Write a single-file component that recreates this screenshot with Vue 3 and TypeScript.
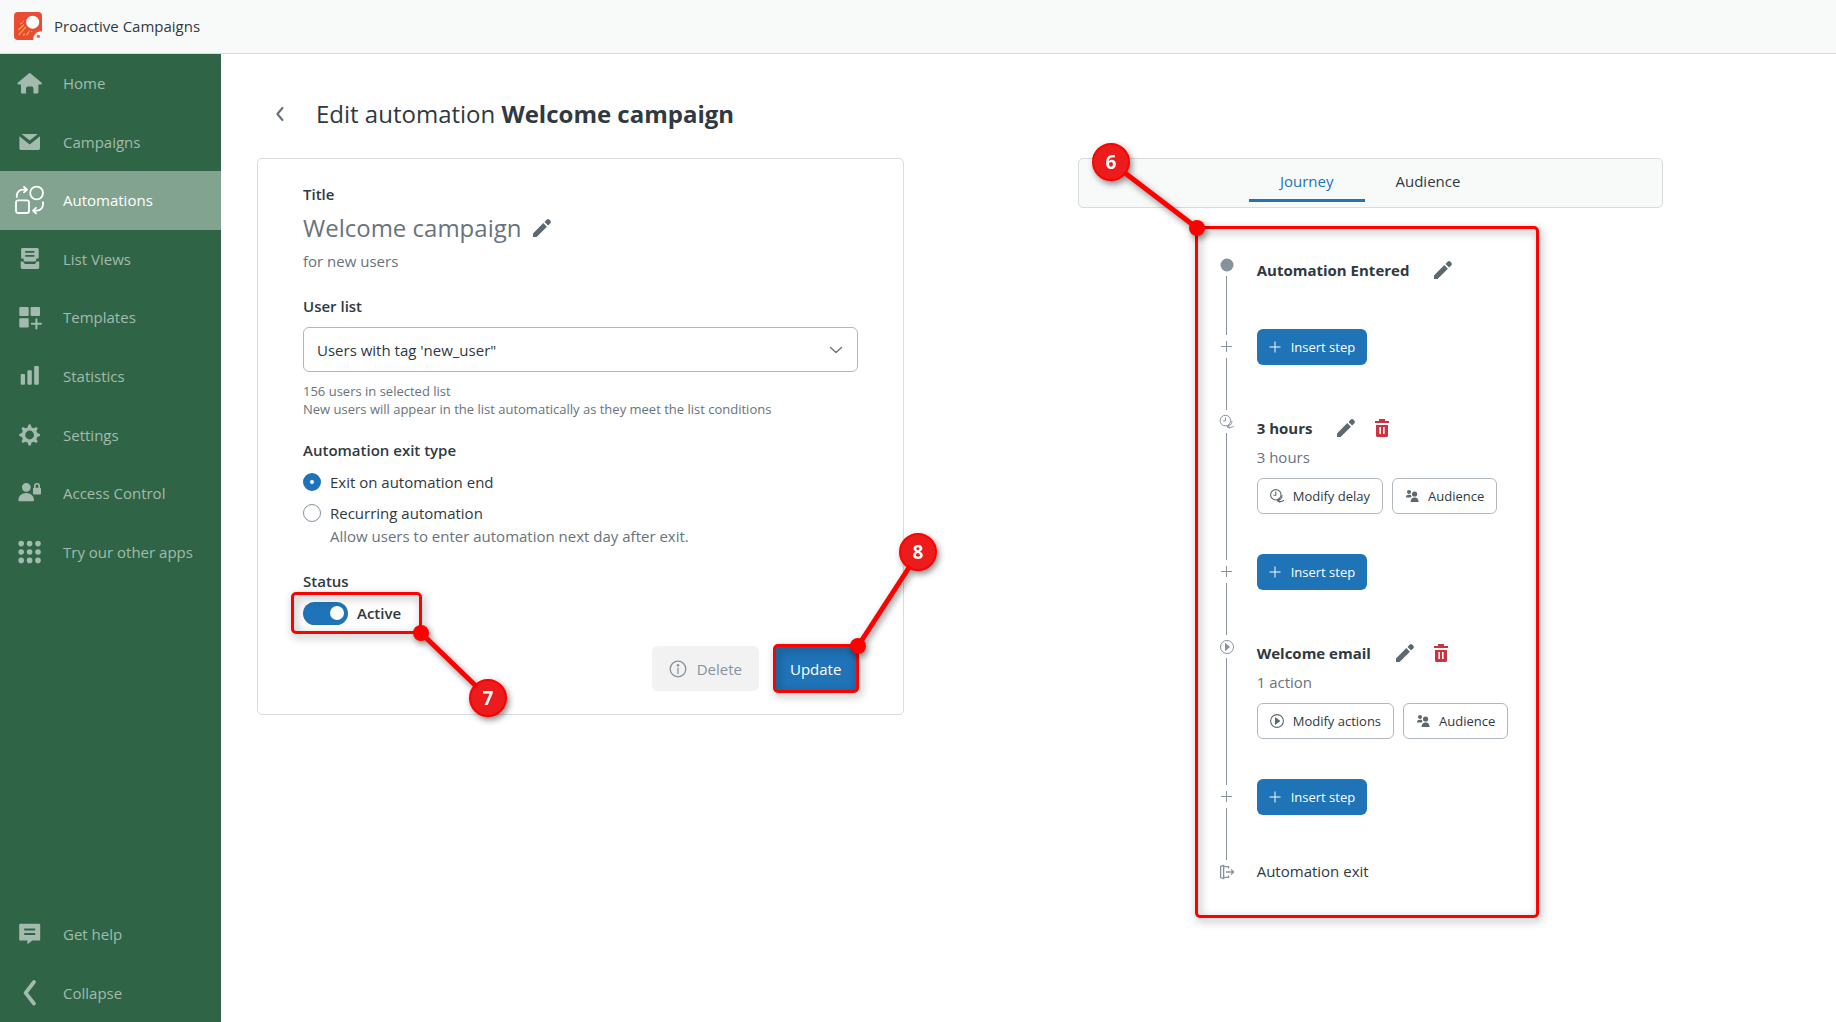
<script setup lang="ts">
import { ref } from 'vue'

interface NavItem {
  label: string
  solid?: string
  line?: string
  lineWidth?: number
  active?: boolean
}

interface Step {
  kind: 'start' | 'insert' | 'delay' | 'action' | 'exit'
  title?: string
  detail?: string
  modify?: string
}

const navItems: NavItem[] = [
  {
    label: 'Home',
    solid:
      'M13.8 5.4a1.4 1.4 0 0 1 1.8 0L26.4 14.6c1 .9.5 2-.7 2H23.4V24.6a1 1 0 0 1-1 1H18.4V20.4a1.8 1.8 0 0 0-1.8-1.8H12.8a1.8 1.8 0 0 0-1.8 1.8V25.6H7a1 1 0 0 1-1-1V16.6H3.7c-1.2 0-1.7-1.1-.7-2Z',
  },
  {
    label: 'Campaigns',
    solid:
      'M6.6 7H22.8L14.7 13.4ZM4.4 9.2 14.7 17.4 25 9.2V21.6A1.4 1.4 0 0 1 23.6 23H5.8A1.4 1.4 0 0 1 4.4 21.6Z',
  },
  {
    label: 'Automations',
    active: true,
    line: 'M28 8A6.4 6.4 0 1 1 15.2 8A6.4 6.4 0 1 1 28 8ZM3 15.4H12A2 2 0 0 1 14 17.4V26A2 2 0 0 1 12 28H3A2 2 0 0 1 1 26V17.4A2 2 0 0 1 3 15.4ZM1.8 12V10.6A6 6 0 0 1 7.8 4.6H11.6M9 1.8 12 4.6 9 7.4M28 17.2V19.6A6 6 0 0 1 22 25.6H18.4M21 22.8 18 25.6 21 28.4',
    lineWidth: 1.8,
  },
  {
    label: 'List Views',
    solid:
      'M7.5 4H22.3A1.4 1.4 0 0 1 23.7 5.4V14.6H21.2V16.2A1.4 1.4 0 0 1 19.8 17.6H10A1.4 1.4 0 0 1 8.6 16.2V14.6H6.1V5.4A1.4 1.4 0 0 1 7.5 4ZM10.2 7V8.7H19.4V7ZM10.2 11V12.7H19.4V11ZM5.7 17.6H8.2L9.8 20H20L21.6 17.6H24.2V23.6A1.4 1.4 0 0 1 22.8 25H7.1A1.4 1.4 0 0 1 5.7 23.6Z',
  },
  {
    label: 'Templates',
    solid:
      'M5.3 5H12.7A1 1 0 0 1 13.7 6V13A1 1 0 0 1 12.7 14H5.3A1 1 0 0 1 4.3 13V6A1 1 0 0 1 5.3 5ZM16.6 5H24A1 1 0 0 1 25 6V13A1 1 0 0 1 24 14H16.6A1 1 0 0 1 15.6 13V6A1 1 0 0 1 16.6 5ZM5.3 16.2H12.7A1 1 0 0 1 13.7 17.2V24.4A1 1 0 0 1 12.7 25.4H5.3A1 1 0 0 1 4.3 24.4V17.2A1 1 0 0 1 5.3 16.2Z',
    line: 'M21.4 17.2V26.4M16.8 21.8H26',
    lineWidth: 2,
  },
  {
    label: 'Statistics',
    solid:
      'M6.7 13H9A1 1 0 0 1 10 14V22.8A1 1 0 0 1 9 23.8H6.7A1 1 0 0 1 5.7 22.8V14A1 1 0 0 1 6.7 13ZM13.4 9.2H15.8A1 1 0 0 1 16.8 10.2V22.8A1 1 0 0 1 15.8 23.8H13.4A1 1 0 0 1 12.4 22.8V10.2A1 1 0 0 1 13.4 9.2ZM20.2 5H22.8A1 1 0 0 1 23.8 6V22.8A1 1 0 0 1 22.8 23.8H20.2A1 1 0 0 1 19.2 22.8V6A1 1 0 0 1 20.2 5Z',
  },
  {
    label: 'Settings',
    solid:
      'M13.3 5.2A1.4 1.4 0 0 1 15.9 5.2L16.6 7.4 18.7 8.3 20.8 7.2A1.4 1.4 0 0 1 22.5 8.9L21.4 11 22.3 13.1 24.2 13.7A1.4 1.4 0 0 1 24.2 16.3L22.3 16.9 21.4 19 22.5 21.1A1.4 1.4 0 0 1 20.8 22.8L18.7 21.7 16.6 22.6 15.9 24.8A1.4 1.4 0 0 1 13.3 24.8L12.6 22.6 10.5 21.7 8.4 22.8A1.4 1.4 0 0 1 6.7 21.1L7.8 19 6.9 16.9 5 16.3A1.4 1.4 0 0 1 5 13.7L6.9 13.1 7.8 11 6.7 8.9A1.4 1.4 0 0 1 8.4 7.2L10.5 8.3 12.6 7.4ZM14.6 10.6A4.4 4.4 0 1 0 14.6 19.4A4.4 4.4 0 1 0 14.6 10.6Z',
  },
  {
    label: 'Access Control',
    solid:
      'M11.3 4.9A4.4 4.4 0 1 1 11.3 13.7A4.4 4.4 0 1 1 11.3 4.9ZM3.4 22.2C3.4 17.8 6.8 14.9 11.2 14.9S19 17.8 19 22.2A1 1 0 0 1 18 23.2H4.4A1 1 0 0 1 3.4 22.2ZM19 9.8H25A1 1 0 0 1 26 10.8V15.6A1 1 0 0 1 25 16.6H19A1 1 0 0 1 18 15.6V10.8A1 1 0 0 1 19 9.8Z',
    line: 'M19.8 10V8A2.2 2.2 0 0 1 24.2 8V10',
    lineWidth: 1.6,
  },
  {
    label: 'Try our other apps',
    line: 'M6.2 6.6h0M14.6 6.6h0M23 6.6h0M6.2 15h0M14.6 15h0M23 15h0M6.2 23.4h0M14.6 23.4h0M23 23.4h0',
    lineWidth: 5.6,
  },
]

const footerItems: NavItem[] = [
  {
    label: 'Get help',
    solid:
      'M5.4 4.7H24A1.2 1.2 0 0 1 25.2 5.9V20.4A1.2 1.2 0 0 1 24 21.6H17.4L12.4 25.2V21.6H5.4A1.2 1.2 0 0 1 4.2 20.4V5.9A1.2 1.2 0 0 1 5.4 4.7ZM9.2 9.4V11.4H20.2V9.4ZM9.2 14V16H20.2V14Z',
  },
  { label: 'Collapse', line: 'M19 4 10.6 14.8 19 25.6', lineWidth: 3.8 },
]

const steps: Step[] = [
  { kind: 'start', title: 'Automation Entered' },
  { kind: 'insert' },
  { kind: 'delay', title: '3 hours', detail: '3 hours', modify: 'Modify delay' },
  { kind: 'insert' },
  { kind: 'action', title: 'Welcome email', detail: '1 action', modify: 'Modify actions' },
  { kind: 'insert' },
  { kind: 'exit', title: 'Automation exit' },
]

const pencil =
  'M0 14.4V18H3.6L13.9 7.7 10.3 4.1ZM11.5 2.9 13.6.8A2 2 0 0 1 16.4.8L17.2 1.6A2 2 0 0 1 17.2 4.4L15.1 6.5Z'

const userList = ref('new_user')
const exitType = ref('end')
const active = ref(true)
</script>

<template>
  <div class="app">
    <header class="topbar">
      <svg class="logo" viewBox="0 0 28 28" aria-hidden="true">
        <path d="M4 0H24A4 4 0 0 1 28 4V19.4A7.5 7.5 0 0 0 19.4 28H4A4 4 0 0 1 0 24V4A4 4 0 0 1 4 0Z" fill="#eb4a34" />
        <circle cx="18.7" cy="10.2" r="6.5" fill="#fff" />
        <path d="M5 22.6 11.6 15.2M4.8 17.6 9.4 13.2M12.6 22.8 15.4 19.2M9.6 23 10.4 22M6.800 11.8 8 11M17.6 19.4h0M9.2 9.4h0" stroke="#f9a63a" stroke-width="1.3" stroke-linecap="round" fill="none" />
        <circle cx="24.4" cy="24.4" r="1.7" fill="#f0665a" />
      </svg>
      <span class="app-name">Proactive Campaigns</span>
    </header>

    <div class="body">
      <nav class="sidebar" aria-label="Main">
        <ul class="nav-list">
          <li v-for="item in navItems" :key="item.label">
            <a href="#" class="nav-link" :class="{ active: item.active }">
              <svg class="nav-icon" viewBox="0 0 30 30" aria-hidden="true">
                <path v-if="item.solid" :d="item.solid" fill="currentColor" fill-rule="evenodd" />
                <path v-if="item.line" :d="item.line" :stroke-width="item.lineWidth" fill="none" stroke="currentColor" stroke-linecap="round" stroke-linejoin="round" />
              </svg>
              <span>{{ item.label }}</span>
            </a>
          </li>
        </ul>
        <ul class="nav-list nav-footer">
          <li v-for="item in footerItems" :key="item.label">
            <a href="#" class="nav-link">
              <svg class="nav-icon" viewBox="0 0 30 30" aria-hidden="true">
                <path v-if="item.solid" :d="item.solid" fill="currentColor" fill-rule="evenodd" />
                <path v-if="item.line" :d="item.line" :stroke-width="item.lineWidth" fill="none" stroke="currentColor" stroke-linecap="round" stroke-linejoin="round" />
              </svg>
              <span>{{ item.label }}</span>
            </a>
          </li>
        </ul>
      </nav>

      <main class="main">
        <div class="page-head">
          <button type="button" class="back" aria-label="Back">
            <svg viewBox="0 0 16 16" aria-hidden="true"><path d="M10.4 2 5.4 8 10.4 14" fill="none" stroke="#68737d" stroke-width="2.2" stroke-linecap="round" stroke-linejoin="round" /></svg>
          </button>
          <h1>Edit automation <strong>Welcome campaign</strong></h1>
        </div>

        <div class="columns">
          <form class="card" @submit.prevent>
            <h2 class="label">Title</h2>
            <div class="title-row">
              <span class="title-text">Welcome campaign</span>
              <button type="button" class="icon-btn" aria-label="Edit title">
                <svg viewBox="0 0 18 18" aria-hidden="true"><path :d="pencil" fill="#5c6970" /></svg>
              </button>
            </div>
            <p class="muted">for new users</p>

            <label class="label list-label" for="user-list">User list</label>
            <div class="select-wrap">
              <select id="user-list" v-model="userList">
                <option value="new_user">Users with tag 'new_user"</option>
              </select>
              <svg class="chevron" viewBox="0 0 14 8" aria-hidden="true"><path d="M1.5 1.5 7 6.5 12.5 1.5" fill="none" stroke="#68737d" stroke-width="1.4" stroke-linecap="round" stroke-linejoin="round" /></svg>
            </div>
            <p class="hint">156 users in selected list<br />New users will appear in the list automatically as they meet the list conditions</p>

            <fieldset class="exit-type">
              <legend class="label">Automation exit type</legend>
              <div class="radio-row">
                <input id="exit-end" v-model="exitType" type="radio" name="exit" value="end" />
                <label for="exit-end">Exit on automation end</label>
              </div>
              <div class="radio-row">
                <input id="exit-recurring" v-model="exitType" type="radio" name="exit" value="recurring" aria-describedby="recurring-hint" />
                <label for="exit-recurring">Recurring automation</label>
              </div>
              <p id="recurring-hint" class="muted radio-hint">Allow users to enter automation next day after exit.</p>
            </fieldset>

            <h2 class="label status-label">Status</h2>
            <div class="status-row">
              <input id="status" v-model="active" class="toggle" type="checkbox" role="switch" />
              <label for="status">Active</label>
              <span class="frame frame-status"></span>
              <svg class="pointer pointer-status" viewBox="0 0 90 90" aria-hidden="true">
                <circle cx="75" cy="73" r="18" class="badge" />
                <path d="M8 8 64 62" class="leader" />
                <circle cx="8" cy="8" r="8" class="joint" />
                <text x="75" y="80" class="num">7</text>
              </svg>
            </div>

            <div class="actions">
              <button type="button" class="btn-delete" disabled>
                <svg viewBox="0 0 18 18" aria-hidden="true"><circle cx="9" cy="9" r="7.8" fill="none" stroke="currentColor" stroke-width="1.3" /><circle cx="9" cy="5.2" r="1.3" fill="currentColor" /><path d="M9 8V13.6" stroke="currentColor" stroke-width="1.3" stroke-linecap="round" /></svg>
                Delete
              </button>
              <div class="update-wrap">
                <button type="submit" class="btn-update">Update</button>
                <span class="frame frame-update"></span>
                <svg class="pointer pointer-update" viewBox="0 0 90 130" aria-hidden="true">
                  <circle cx="68" cy="20" r="18" class="badge" />
                  <path d="M8 114 60 34" class="leader" />
                  <circle cx="8" cy="114" r="8" class="joint" />
                  <text x="68" y="27" class="num">8</text>
                </svg>
              </div>
            </div>
          </form>

          <section class="side">
            <div class="panel">
              <div class="tabs" role="tablist">
                <button type="button" role="tab" aria-selected="true" class="tab selected">Journey</button>
                <button type="button" role="tab" aria-selected="false" class="tab">Audience</button>
              </div>

              <div class="journey">
                <ol class="steps">
                  <li v-for="(step, i) in steps" :key="i" class="step" :class="step.kind">
                    <span class="rail">
                      <svg class="marker" viewBox="0 0 23 23" aria-hidden="true">
                        <circle v-if="step.kind === 'start'" cx="12" cy="12" r="6.5" fill="#87929d" />
                        <path v-else-if="step.kind === 'insert'" d="M11.5 6V17M6 11.5H17" class="thin" />
                        <g v-else-if="step.kind === 'delay'" class="thin">
                          <circle cx="10.4" cy="10.6" r="5.3" />
                          <path d="M10.4 7.4V11H8M18.9 16C17.6 17.6 14.4 17.8 12 16.6M16.8 11C17.2 13.4 16 15.2 12.4 16.6M14.4 14.2 12.2 16.6 14.8 18.4" />
                        </g>
                        <g v-else-if="step.kind === 'action'">
                          <circle cx="12" cy="12" r="6.5" class="thin" />
                          <path d="M10 7.8 15 12 10 16.2Z" fill="#87929d" />
                        </g>
                        <path v-else class="thin exit-mark" d="M13.6 8.6V6.6H9M13.6 15.4V17.4H9M5.6 6.4 8.6 5.4V18.6L5.6 17.6ZM11 12H18.4M16 9.4 18.6 12 16 14.6" />
                      </svg>
                      <span v-if="step.kind !== 'exit'" class="rail-line"></span>
                    </span>

                    <button v-if="step.kind === 'insert'" type="button" class="btn-insert">
                      <svg viewBox="0 0 12 12" aria-hidden="true"><path d="M6 .5V11.5M.5 6H11.5" stroke="currentColor" fill="none" /></svg>
                      Insert step
                    </button>
                    <div v-else class="step-body">
                      <div class="step-head">
                        <h3>{{ step.title }}</h3>
                        <button v-if="step.kind !== 'exit'" type="button" class="icon-btn" aria-label="Rename step">
                          <svg viewBox="0 0 18 18" aria-hidden="true"><path :d="pencil" fill="#5c6970" /></svg>
                        </button>
                        <button v-if="step.modify" type="button" class="icon-btn" aria-label="Delete step">
                          <svg viewBox="0 0 18 18" aria-hidden="true"><path d="M4 0H10V2H14V4H0V2H4ZM1 6H13V16.4A1.6 1.6 0 0 1 11.4 18H2.6A1.6 1.6 0 0 1 1 16.4ZM4.4 8V15H6V8ZM8 8V15H9.6V8Z" fill="#cc3340" fill-rule="evenodd" /></svg>
                        </button>
                      </div>
                      <template v-if="step.modify">
                        <p class="muted detail">{{ step.detail }}</p>
                        <div class="step-actions">
                          <button type="button" class="btn-outline">
                            <svg viewBox="0 0 14 14" aria-hidden="true">
                              <g v-if="step.kind === 'delay'" fill="none" stroke="#5c6970" stroke-width="1.1">
                                <circle cx="5.8" cy="5.8" r="5.2" />
                                <path d="M5.8 2.6V6.2H3.4M13.9 11C12.6 12.6 9.6 12.8 7.2 11.8M11.9 6.2C12.3 8.6 11 10.4 7.6 11.8M9.4 9.400 7.4 11.8 10 13.4" />
                              </g>
                              <g v-else>
                                <circle cx="7" cy="7" r="6.4" fill="none" stroke="#5c6970" stroke-width="1.1" />
                                <path d="M5 3 10.4 7 5 11Z" fill="#5c6970" />
                              </g>
                            </svg>
                            {{ step.modify }}
                          </button>
                          <button type="button" class="btn-outline">
                            <svg viewBox="0 0 14 14" aria-hidden="true">
                              <g fill="#5c6970">
                                <circle cx="4" cy="3" r="2" />
                                <circle cx="9.6" cy="5" r="2.6" />
                                <path d="M1 8.4C1 6.4 2.4 5.8 4 5.8S6.2 6.2 6.4 7 6 8.4 5.4 8.4ZM5.6 13C5.6 9.6 7.4 8.4 9.6 8.4S13.6 9.6 13.6 13Z" />
                              </g>
                            </svg>
                            Audience
                          </button>
                        </div>
                      </template>
                    </div>
                  </li>
                </ol>
                <span class="frame frame-journey"></span>
                <svg class="pointer pointer-journey" viewBox="0 0 120 90" aria-hidden="true">
                  <circle cx="20" cy="20" r="18" class="badge" />
                  <path d="M106 86 34 31" class="leader" />
                  <circle cx="106" cy="86" r="8" class="joint" />
                  <text x="20" y="27" class="num">6</text>
                </svg>
              </div>
            </div>
          </section>
        </div>
      </main>
    </div>
  </div>
</template>

<style>
body {
  margin: 0;
  background: #fff;
}
</style>

<style scoped>
.app {
  display: flex;
  flex-direction: column;
  min-height: 100vh;
  font-family: 'Open Sans', 'Noto Sans', sans-serif;
  font-size: 15px;
  line-height: 24px;
  color: #2f3941;
}
.app *,
.app *::before,
.app *::after {
  box-sizing: border-box;
}
button,
select,
input {
  font: inherit;
  color: inherit;
  margin: 0;
}
button {
  border: 0;
  background: none;
  padding: 0;
  cursor: pointer;
}
h1,
h2,
h3,
p,
ul,
ol {
  margin: 0;
  padding: 0;
  list-style: none;
}
svg {
  display: block;
  flex: none;
}

.topbar {
  display: flex;
  align-items: center;
  gap: 12px;
  height: 54px;
  padding: 0 14px 2px;
  background: #f8f9f9;
  border-bottom: 1px solid #d8dcde;
}
.logo {
  width: 28px;
  height: 28px;
}
.app-name {
  font-weight: 500;
}

.body {
  display: flex;
  flex: 1;
}
.sidebar {
  display: flex;
  flex-direction: column;
  justify-content: space-between;
  flex: none;
  width: 221px;
  background: #2f6546;
}
.nav-list {
  display: grid;
  grid-auto-rows: 1fr;
  height: 527px;
}
.nav-footer {
  height: 117px;
}
.nav-link {
  display: flex;
  align-items: center;
  gap: 18px;
  height: 100%;
  padding-left: 15px;
  color: #a3bbae;
  text-decoration: none;
}
.nav-link.active {
  background: #82a390;
  color: #fff;
}
.nav-icon {
  width: 30px;
  height: 30px;
}

.main {
  flex: 1;
  min-width: 0;
  padding: 40px 0 40px 36px;
}
.page-head {
  display: flex;
  align-items: center;
  gap: 28px;
  height: 40px;
  padding-left: 15px;
}
.back svg {
  width: 16px;
  height: 16px;
}
h1 {
  font-size: 24px;
  line-height: 32px;
  font-weight: 400;
}
.columns {
  display: flex;
  align-items: flex-start;
  margin-top: 24px;
}
.card {
  flex: 0 0 41%;
  padding: 23px 45px;
  border: 1px solid #d8dcde;
  border-radius: 5px;
}
.label {
  display: block;
  font-size: 15px;
  line-height: 24px;
  font-weight: 600;
}
.title-row {
  display: flex;
  align-items: center;
  gap: 12px;
  height: 32px;
  margin-top: 6px;
  font-size: 24px;
  color: #68737d;
}
.icon-btn svg {
  width: 18px;
  height: 18px;
}
.muted {
  color: #68737d;
}
.title-row + .muted {
  margin-top: 5px;
}
.list-label {
  margin-top: 21px;
}
.select-wrap {
  display: flex;
  align-items: center;
  position: relative;
  margin-top: 9px;
}
select {
  appearance: none;
  width: 100%;
  height: 45px;
  padding: 0 44px 0 13px;
  border: 1px solid #b0b8be;
  border-radius: 6px;
  background: #fff;
}
.chevron {
  position: absolute;
  right: 15px;
  width: 14px;
  height: 8px;
  pointer-events: none;
}
.hint {
  margin-top: 10px;
  font-size: 13px;
  line-height: 18px;
  color: #68737d;
}
.exit-type {
  margin: 20px 0 0;
  padding: 0;
  border: 0;
}
.exit-type legend {
  padding: 0;
}
.radio-row {
  display: flex;
  align-items: center;
  gap: 9px;
  margin-top: 8px;
}
.radio-row + .radio-row {
  margin-top: 7px;
}
input[type='radio'] {
  appearance: none;
  width: 18px;
  height: 18px;
  border: 1px solid #87929d;
  border-radius: 50%;
  background: #fff;
}
input[type='radio']:checked {
  border: 7px solid #1f73b7;
}
.radio-hint {
  padding-left: 27px;
  line-height: 22px;
}
.status-label {
  margin-top: 22px;
}
.status-row {
  position: relative;
  display: flex;
  align-items: center;
  gap: 9px;
  height: 32px;
  margin-top: 4px;
  font-weight: 600;
}
.toggle {
  appearance: none;
  display: flex;
  align-items: center;
  justify-content: flex-end;
  width: 45px;
  height: 23px;
  padding: 0 4px;
  border-radius: 12px;
  background: #1f73b7;
}
.toggle::before {
  content: '';
  width: 14px;
  height: 14px;
  border-radius: 50%;
  background: #fff;
}
.toggle:not(:checked) {
  justify-content: flex-start;
  background: #87929d;
}
.actions {
  display: flex;
  justify-content: flex-end;
  gap: 14px;
  margin-top: 17px;
}
.btn-delete {
  display: flex;
  align-items: center;
  gap: 10px;
  height: 45px;
  padding: 0 17px;
  border-radius: 6px;
  background: #f2f2f2;
  color: #87929d;
}
.btn-delete svg {
  width: 18px;
  height: 18px;
}
.update-wrap {
  position: relative;
}
.btn-update {
  height: 45px;
  padding: 0 17px;
  border-radius: 6px;
  background: #1f73b7;
  color: #fff;
}

.side {
  display: flex;
  justify-content: center;
  flex: 1;
  min-width: 0;
}
.panel {
  width: 100%;
  max-width: 585px;
}
.tabs {
  display: flex;
  justify-content: center;
  height: 50px;
  padding: 0 0 5px;
  background: #f8f9f9;
  border: 1px solid #d8dcde;
  border-radius: 5px;
}
.tab {
  padding: 3px 31px 0;
  border-bottom: 3px solid transparent;
}
.tab.selected {
  color: #1f73b7;
  border-color: #1f73b7;
}

.journey {
  position: relative;
  width: 344px;
  margin: 18px 0 0 20%;
  padding: 27px 20px 35px;
}
.step {
  display: flex;
  gap: 19px;
}
.rail {
  display: flex;
  flex-direction: column;
  align-items: center;
  flex: none;
  width: 23px;
}
.marker {
  width: 23px;
  height: 23px;
}
.thin {
  fill: none;
  stroke: #87929d;
  stroke-width: 1;
}
.exit-mark {
  stroke-width: 1.3;
}
.rail-line {
  flex: 1;
  width: 1px;
  background: #87929d;
}
.start {
  height: 82px;
}
.insert {
  height: 75px;
}
.delay,
.action {
  height: 150px;
}
.step-body {
  padding-top: 6px;
}
.start .step-body {
  padding-top: 5px;
}
.exit .step-body {
  padding-top: 0;
}
.exit .step-head {
  height: 22px;
}
.step-head {
  display: flex;
  align-items: center;
  gap: 20px;
}
h3 {
  margin-right: 5px;
  font-size: 15px;
  line-height: 24px;
  font-weight: 700;
}
.exit h3 {
  font-weight: 400;
}
.detail {
  margin-top: 5px;
}
.step-actions {
  display: flex;
  gap: 9px;
  margin-top: 9px;
}
.btn-outline,
.btn-insert {
  display: flex;
  align-items: center;
  gap: 9px;
  height: 36px;
  padding: 0 12px;
  border-radius: 6px;
  font-size: 13px;
  white-space: nowrap;
}
.btn-outline {
  border: 1px solid #b0b8be;
}
.btn-outline svg {
  width: 14px;
  height: 14px;
}
.btn-insert {
  gap: 10px;
  margin-top: -6px;
  background: #1f73b7;
  color: #fff;
}
.btn-insert svg {
  width: 12px;
  height: 12px;
}

/* Numbered call-outs drawn over the page */
.frame {
  position: absolute;
  border: 3px solid #f00;
  border-radius: 5px;
  filter: drop-shadow(2px 3px 4px rgba(0, 0, 0, 0.4));
  pointer-events: none;
}
.pointer {
  position: absolute;
  z-index: 2;
  overflow: visible;
  filter: drop-shadow(2px 3px 3px rgba(0, 0, 0, 0.45));
  pointer-events: none;
}
.badge {
  fill: #ed1c1c;
  stroke: #f00;
  stroke-width: 2;
}
.leader {
  stroke: #f00;
  stroke-width: 5;
}
.joint {
  fill: #f00;
}
.num {
  fill: #fff;
  font-size: 19px;
  font-weight: 700;
  text-anchor: middle;
}
.frame-status {
  left: -12px;
  top: -5px;
  width: 131px;
  height: 42px;
}
.pointer-status {
  left: 110px;
  top: 28px;
  width: 90px;
  height: 90px;
}
.frame-update {
  inset: -2px -1px -2px 0;
}
.pointer-update {
  right: -82px;
  bottom: 29px;
  width: 90px;
  height: 130px;
}
.frame-journey {
  inset: 0;
}
.pointer-journey {
  left: -104px;
  top: -84px;
  width: 120px;
  height: 90px;
}
</style>
